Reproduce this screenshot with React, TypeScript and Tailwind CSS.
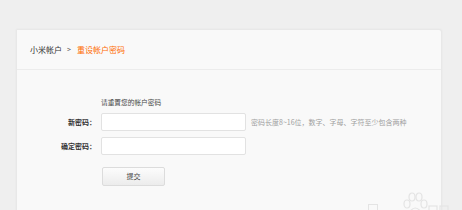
import React from 'react';

const font = { fontFamily: '"Noto Sans CJK SC", "Noto Sans", sans-serif' };

const FormRow: React.FC<{ label: string; hint?: string }> = ({ label, hint }) => (
  <div className="flex items-center h-[18px]">
    <div className="w-[80px] text-right pr-[1px] text-[7px] leading-[18px] text-[#333] font-bold">{label}</div>
    <div className="w-[4px]" />
    <input
      type="password"
      className="w-[145px] h-[18px] bg-white border border-[#e2e2e2] rounded-[2px] outline-none"
    />
    {hint && <span className="ml-[5px] text-[7px] text-[#a0a0a0] leading-[18px]">{hint}</span>}
  </div>
);

export default function App() {
  return (
    <div className="w-full h-[210px] bg-[#efefef] overflow-hidden pt-[29px] pl-[16px] relative" style={font}>
      <div className="w-[426px] h-[200px] bg-[#f9f9f9] border border-[#e8e8e8] rounded-tr-[3px] shadow-[0_0_2px_rgba(0,0,0,0.05)]">
        <div className="h-[40px] px-[13px] flex items-center border-b border-[#ececec] text-[8px]">
          <span className="text-[#333]">小米帐户</span>
          <span className="text-[#555] ml-[5px] mr-[6px] text-[7px]">&gt;</span>
          <span className="text-[#ff6a00]">重设帐户密码</span>
        </div>
        <div>
          <div className="mt-[27px] h-[10px] leading-[10px] pl-[84px] text-[6.7px] text-[#444]">请重置您的帐户密码</div>
          <div className="mt-[6px]">
            <FormRow label="新密码：" hint="密码长度8~16位，数字、字母、字符至少包含两种" />
          </div>
          <div className="mt-[6px]">
            <FormRow label="确定密码：" />
          </div>
          <div className="mt-[5px] pl-[85px]">
            <button className="w-[63px] h-[19px] border border-[#dcdcdc] rounded-[2px] bg-gradient-to-b from-[#fcfcfc] to-[#ececec] text-[7px] text-[#444]">
              提交
            </button>
          </div>
        </div>
      </div>
      <svg className="absolute left-[396px] top-[191px]" width="60" height="22" viewBox="0 0 60 22" fill="none" stroke="#e4e4e4" strokeWidth="1.2">
        <ellipse cx="16" cy="6" rx="3" ry="4" />
        <ellipse cx="23" cy="6" rx="3" ry="4" />
        <ellipse cx="11" cy="13" rx="3" ry="4" />
        <ellipse cx="28" cy="13" rx="3" ry="4" />
        <path d="M13 22 Q19 12 26 22" />
        <rect x="33" y="15" width="8" height="8" />
        <rect x="44" y="15" width="8" height="8" />
      </svg>
      <div className="absolute left-[368px] top-[204px] w-[10px] h-[8px] border border-[#e4e4e4]" />
    </div>
  );
}
